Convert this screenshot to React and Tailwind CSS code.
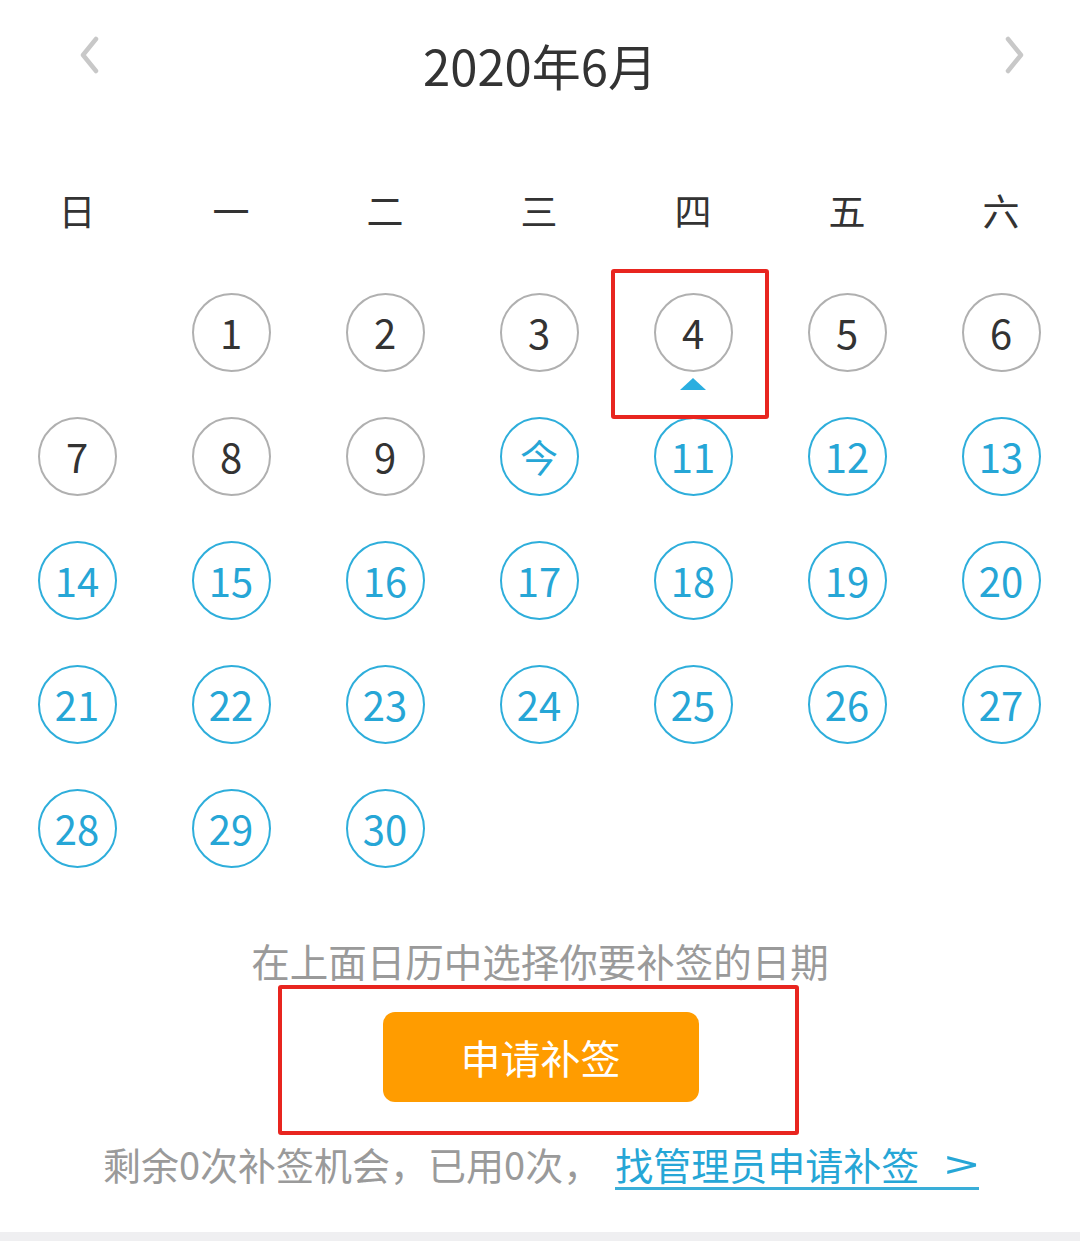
import React from "react";

const FONT = { fontFamily: '"Noto Sans CJK SC", "Noto Sans", sans-serif' };

function Chevron({ dir }) {
  return (
    <svg width="22" height="38" viewBox="0 0 22 38" className="block">
      {dir === "left" ? (
        <polyline points="17,3 4,19 17,35" fill="none" stroke="#c8c8c8" strokeWidth="4.5" strokeLinecap="round" strokeLinejoin="round" />
      ) : (
        <polyline points="5,3 18,19 5,35" fill="none" stroke="#c8c8c8" strokeWidth="4.5" strokeLinecap="round" strokeLinejoin="round" />
      )}
    </svg>
  );
}

const weekdays = ["日", "一", "二", "三", "四", "五", "六"];

export default function App() {
  const cells = [null];
  for (let d = 1; d <= 30; d++) cells.push(d);
  const rows = [];
  for (let i = 0; i < cells.length; i += 7) rows.push(cells.slice(i, i + 7));

  return (
    <div className="w-[1080px] h-[1241px] bg-white flex flex-col overflow-hidden" style={FONT}>
      {/* header */}
      <div className="h-[130px] flex items-center">
        <div className="w-[180px] pl-[79px] -mt-[20px]">
          <Chevron dir="left" />
        </div>
        <div className="flex-1 text-center text-[49px] leading-[60px] text-[#333333]">2020年6月</div>
        <div className="w-[180px] flex justify-end pr-[55px] -mt-[20px]">
          <Chevron dir="right" />
        </div>
      </div>

      {/* weekdays */}
      <div className="mt-[50px] h-[60px] w-[1078px] grid grid-cols-7">
        {weekdays.map((w) => (
          <div key={w} className="flex items-center justify-center text-[37px] leading-[60px] text-[#333333]">
            {w}
          </div>
        ))}
      </div>

      {/* dates */}
      <div className="mt-[30px] w-[1078px] flex flex-col">
        {rows.map((row, ri) => (
          <div key={ri} className="grid grid-cols-7 h-[124px]">
            {Array.from({ length: 7 }).map((_, ci) => {
              const d = row[ci];
              if (d === undefined || d === null) return <div key={ci} />;
              const past = d < 10;
              const label = d === 10 ? "今" : String(d);
              return (
                <div key={ci} className="relative flex items-center justify-center">
                  <div
                    className={
                      "w-[79px] h-[79px] rounded-full border-[2.5px] flex items-center justify-center text-[40px] leading-none " +
                      (past ? "border-[#b0b0b0] text-[#333333]" : "border-[#2eaedb] text-[#26a6d6]")
                    }
                  >
                    <span className={d === 10 ? "text-[38px]" : ""}>{label}</span>
                  </div>
                  {d === 4 && (
                    <>
                      <div className="absolute left-1/2 -translate-x-1/2 top-[108px] w-0 h-0 border-l-[13px] border-r-[13px] border-b-[12px] border-l-transparent border-r-transparent border-b-[#2aaee0]" />
                      <div className="absolute left-[-5px] top-[-1px] w-[158px] h-[150px] border-[4px] border-[#e8251f] rounded-[3px] z-10" />
                    </>
                  )}
                </div>
              );
            })}
          </div>
        ))}
      </div>

      {/* instruction */}
      <div className="mt-[45px] h-[50px] text-center text-[38.5px] leading-[50px] text-[#9a9a9a]">
        在上面日历中选择你要补签的日期
      </div>

      {/* button area */}
      <div className="ml-[278px] w-[521px] h-[150px] border-[4px] border-[#e8251f] rounded-[3px] flex justify-center pt-[23px]">
        <div className="ml-[4px] w-[316px] h-[90px] rounded-[12px] bg-[#ff9c00] flex items-center justify-center text-white text-[40px] leading-none">
          申请补签
        </div>
      </div>

      {/* bottom text */}
      <div className="mt-[5px] pl-[103px] flex items-start text-[38px]">
        <span className="leading-[47px] text-[#9a9a9a]">剩余0次补签机会，已用0次，</span>
        <span className="ml-[14px] leading-[47px] text-[#26a6d6] border-b-[3px] border-[#3aaed8] flex">
          <span>找管理员申请补签</span>
          <span className="ml-[26px] w-[34px] text-[40px] inline-block scale-x-150 origin-left">&gt;</span>
        </span>
      </div>

      <div className="mt-auto h-[9px] bg-[#efeff1]" />
    </div>
  );
}
